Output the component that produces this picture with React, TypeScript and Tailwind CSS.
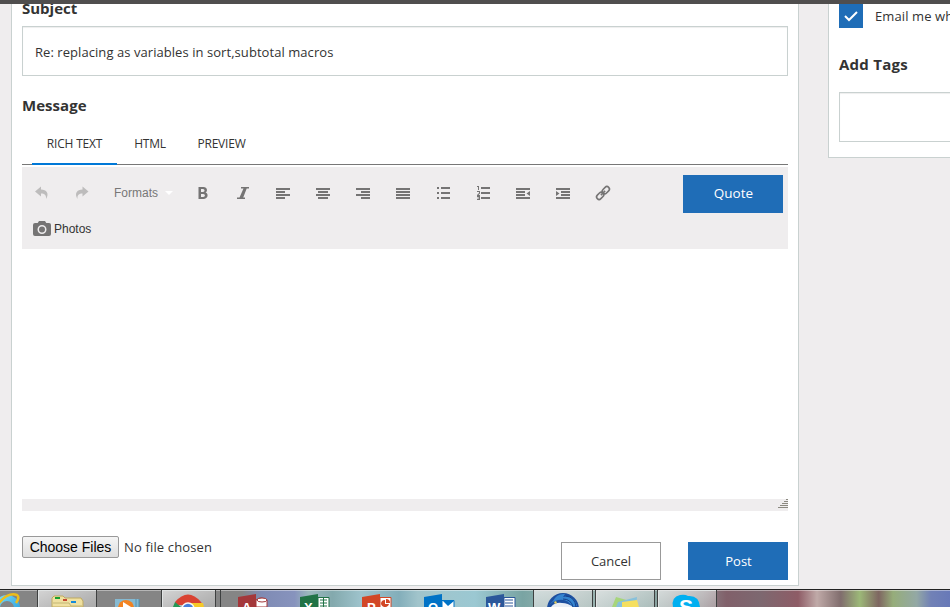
import type { ReactNode } from "react";

const Icon = ({ children, className = "text-[#757474]" }: { children: ReactNode; className?: string }) => (
   <button className={"w-10 h-6 flex items-center justify-center " + className}>
      <svg width="18" height="18" viewBox="0 0 18 18" fill="currentColor">{children}</svg>
   </button>
);

const Bars = ({ rows }: { rows: number[][] }) => (
   <>{rows.map(([x, w], i) => <rect key={i} x={x} y={4 + i * 3} width={w} height="2" />)}</>
);

const Toolbar = () => (
   <div className="h-[82px] mt-[2px] bg-[#efedee] relative">
      <div className="flex items-center pt-[14px]">
         <Icon className="text-[#bdbcbc]"><path d="M2 7.500L8 2.500v3c5.500 0 8.500 4 5 9.500.5-4-1.500-5.500-5-5.500v3z" /></Icon>
         <Icon className="text-[#bdbcbc]"><path d="M15.500 7.500l-6-5v3c-5.500 0-8.500 4-5 9.500-.5-4 1.500-5.500 5-5.500v3z" /></Icon>
         <button className="w-[81px] h-6 pl-[12px] flex items-center gap-[7px] font-['Liberation_Sans'] text-[12px] text-[#777]">
            Formats<span className="border-x-[4px] border-x-transparent border-t-[4px] border-t-white" />
         </button>
         <Icon><path fillRule="evenodd" d="M4.500 3h5c4 0 4.500 4.500 2 5.600 3.500 1.200 2.500 6.400-2 6.400h-5zM7 5v3h2c2 0 2-3 0-3zM7 10v3h2.200c2.300 0 2.300-3 0-3z" /></Icon>
         <Icon><path d="M7 3h8v1.500h-2.300L9.200 13.500H11V15H3v-1.500h2.500L9.500 4.500H7z" /></Icon>
         <Icon><Bars rows={[[2, 14], [2, 9], [2, 14], [2, 9]]} /></Icon>
         <Icon><Bars rows={[[2, 14], [4, 10], [2, 14], [4, 10]]} /></Icon>
         <Icon><Bars rows={[[2, 14], [7, 9], [2, 14], [7, 9]]} /></Icon>
         <Icon><Bars rows={[[2, 14], [2, 14], [2, 14], [2, 14]]} /></Icon>
         <Icon><path d="M3 3h2v2H3zM7 3h9v2H7zM3 8h2v2H3zM7 8h9v2H7zM3 13h2v2H3zM7 13h9v2H7z" /></Icon>
         <Icon><path d="M3 2h2v4H4V3H3zM3 7h3v2.500L4.500 11H6v1H3v-1l2-2V8H3zM3 12h3v4H3v-1h2v-.5H3.500v-1H5V13H3zM7 3h9v2H7zM7 8h9v2H7zM7 13h9v2H7z" /></Icon>
         <Icon><path d="M2 4h14v2H2zM2 7h9v2H2zM2 10h9v2H2zM2 13h14v2H2zM16 7v5l-3.500-2.500z" /></Icon>
         <Icon><path d="M2 4h14v2H2zM7 7h9v2H7zM7 10h9v2H7zM2 13h14v2H2zM2 7v5l3.500-2.500z" /></Icon>
         <Icon>
            <g fill="none" stroke="currentColor" strokeWidth="1.600" transform="rotate(-45 9 9)">
               <rect x="1" y="6.500" width="8" height="5" rx="2.500" /><rect x="9" y="6.500" width="8" height="5" rx="2.500" /><path d="M6 9h6" />
            </g>
         </Icon>
      </div>
      <button className="flex items-center gap-[3px] ml-[11px] mt-3 h-6 font-['Liberation_Sans'] text-[12px] text-[#333]">
         <svg width="18" height="16" viewBox="0 0 18 16" fill="#757474"><path fillRule="evenodd" d="M6 0h6l1.300 2H16q2 0 2 2v9q0 2-2 2H2q-2 0-2-2V4q0-2 2-2h2.700zM9 4a4.500 4.500 0 100 9 4.500 4.500 0 000-9zm0 1.500a3 3 0 110 6 3 3 0 010-6z" /></svg>
         Photos
      </button>
      <button className="absolute right-[5px] top-2 w-[100px] h-[38px] pl-px pb-px bg-[#1f6db7] text-white text-[13.5px]">Quote</button>
   </div>
);

const Taskbar = () => (
   <div className="h-[18px] shrink-0 border-t border-[#222] bg-[#858585] overflow-hidden">
      <svg width="950" height="17" viewBox="0 590 950 17">
         <defs>
            <linearGradient id="glass">
               <stop offset="0" stopColor="#858585" /><stop offset=".255" stopColor="#858585" /><stop offset=".275" stopColor="#7f8bb4" />
               <stop offset=".31" stopColor="#8793bd" /><stop offset=".325" stopColor="#9bb8bd" /><stop offset=".35" stopColor="#83a9ad" />
               <stop offset=".38" stopColor="#9ec3cc" /><stop offset=".42" stopColor="#83aeba" /><stop offset=".44" stopColor="#a1c4cb" />
               <stop offset=".5" stopColor="#9bc8d2" /><stop offset=".55" stopColor="#79a4a3" /><stop offset=".6" stopColor="#a0b8b5" />
               <stop offset=".68" stopColor="#88a8a4" /><stop offset=".74" stopColor="#8b8387" /><stop offset=".765" stopColor="#81606a" />
               <stop offset=".8" stopColor="#7d6870" /><stop offset=".84" stopColor="#8e5c66" /><stop offset=".86" stopColor="#c0aaa8" />
               <stop offset=".885" stopColor="#806d6d" /><stop offset=".905" stopColor="#9cb878" /><stop offset=".925" stopColor="#7e6661" />
               <stop offset=".94" stopColor="#96ad7a" /><stop offset=".965" stopColor="#93a8a5" /><stop offset=".98" stopColor="#7181b6" /><stop offset="1" stopColor="#6879b8" />
            </linearGradient>
            <linearGradient id="tile" x2="1" y2="1"><stop stopColor="#eee" stopOpacity=".75" /><stop offset="1" stopColor="#ddd" stopOpacity=".35" /></linearGradient>
            <linearGradient id="ring" y2="1"><stop stopColor="#75dafa" /><stop offset="1" stopColor="#269bd8" /></linearGradient>
         </defs>
         <path fill="url(#glass)" d="M0 590h950v17H0z" />
         <path fill="#fff" fillOpacity=".4" d="M0 590h950v1H0z" />
         {[[38, 58], [162, 53], [533, 59], [596, 58], [658, 58]].map(([x, w]) => (
            <rect key={x} x={x + 0.5} y="590.5" width={w} height="24" fill="url(#tile)" stroke="#e0e3e3" />
         ))}
         <path d="M37.500 590v17M96.500 590v17M161.500 590v17M215.500 590v17M220.500 590v17M533.500 590v17M592.500 590v17M595.500 590v17M654.500 590v17M657.500 590v17M716.500 590v17" stroke="#3e4040" />
         <circle cx="7" cy="608" r="10" fill="none" stroke="url(#ring)" strokeWidth="6" />
         <path d="M-1 603Q8 592 17 595q3 2-1 8" fill="none" stroke="#edbd1b" strokeWidth="2.500" />
         <path d="M52 598l2-2h9l2 2h16l2 3v6H52z" fill="#efe0a0" stroke="#bea961" /><path d="M55 597h5v2h-5z" fill="#16a030" /><path d="M63 599h4v2h-4z" fill="#c54931" /><path d="M71 601h5v2h-5z" fill="#178bd8" /><path d="M53 603h16l2 3h11" stroke="#c3b675" fill="none" />
         <path d="M115 599h24v8h-24z" fill="#86bad2" /><path d="M136 599v8M139 599v8" stroke="#5392b2" /><circle cx="126" cy="608" r="8" fill="#f38321" /><path d="M123 602l8 5h-8z" fill="#fff" />
         <path d="M175 602q13-15 26 0l2 3h-27z" fill="#d94232" /><path d="M175 602l6 5h-8z" fill="#249855" /><path d="M190 603h13l1 4h-14z" fill="#f6c928" /><circle cx="188" cy="609" r="6" fill="#477fdb" stroke="#f7f7f7" strokeWidth="1.500" />
         <path d="M238 597l18-3v13h-18z" fill="#a4373a" /><path d="M256 600q5-4 11 0v7h-11z" fill="#fff" stroke="#a4373a" /><ellipse cx="262" cy="600" rx="5" ry="2" fill="#fff" stroke="#a4373a" />
         <path d="M300 597l18-3v13h-18z" fill="#217346" /><path d="M318 597.500h11v10h-11z" fill="#fff" stroke="#217346" /><path d="M320 600h7M320 603h7M320 606h7M323.500 598v9" stroke="#217346" />
         <path d="M362 597l18-3v13h-18z" fill="#d24726" /><path d="M380 597.500h11v10h-11z" fill="#fff" stroke="#d24726" /><path d="M381 602a4 4 0 008 2h-4v-4q-4 0-4 4zM386 599v4h4q0-4-4-4z" fill="#d24726" />
         <path d="M424 597l18-3v13h-18z" fill="#0072c6" /><path d="M442 600.500h12v7h-12z" fill="#fff" stroke="#0072c6" /><path d="M443 601l5 5 6-5" fill="#0072c6" />
         <path d="M486 597l18-3v13h-18z" fill="#2b579a" /><path d="M504 597.500h11v10h-11z" fill="#fff" stroke="#2b579a" /><path d="M505 600h8M505 603h8M505 606h8" stroke="#2b579a" />
         <g fill="#fff" fontFamily="Liberation Sans" fontWeight="700" fontSize="13"><text x="242" y="612">A</text><text x="304" y="612">X</text><text x="367" y="612">P</text><text x="428" y="612">O</text><text x="488" y="612">W</text></g>
         <circle cx="563" cy="609" r="16" fill="#1d4f9f" />
         <path d="M553 601q4-8 12-7l-2 3q11-3 14 9l-5 1q-4-9-14-7-5 1-9 5z" fill="#3584cf" />
         <path d="M551 607q4-5 11-4 6 0 11 4z" fill="#e8edf5" /><path d="M566 596q9 1 10 11M563 599q8 0 10 8" fill="none" stroke="#16408a" />
         <circle cx="555.500" cy="602.500" r="1.200" fill="#ead35e" />
         <path d="M616 597l14 4-3 6h-15z" fill="#a7d57b" /><path d="M618 602l19-5-1 10h-20z" fill="#87c1db" /><path d="M622 602l15-2 2 7h-17z" fill="#f5df5f" />
         <path d="M673 607q-2-10 7-12 5-1 8 1 11-1 12 11z" fill="#00aff0" /><text x="679" y="614" fill="#fff" fontFamily="Liberation Sans" fontWeight="700" fontSize="21">S</text>
      </svg>
   </div>
);

export default function App() {
   return (
      <div className="w-[950px] h-[607px] overflow-hidden flex flex-col bg-[#efedee] font-['Open_Sans',sans-serif] text-[#333]">
         <div className="h-1 shrink-0 bg-[#504e4e]" />
         <div className="h-[585px] shrink-0 flex items-start overflow-hidden">
            <main className="ml-[11px] w-[788px] h-[582px] shrink-0 bg-white border border-t-0 border-[#c9d1d0] px-[10px] overflow-hidden">
               <h2 className="-mt-[8px] h-6 leading-6 text-[15px] font-bold">Subject</h2>
               <input className="block mt-[6px] w-full h-[50px] border border-[#c9d1d0] pl-3 pt-[2px] text-[13px] tracking-[0.06px] shadow-[inset_0_1px_1px_#eee]" defaultValue="Re: replacing as variables in sort,subtotal macros" />
               <h2 className="mt-[17px] h-6 leading-6 text-[15px] font-bold tracking-[0.05px]">Message</h2>
               <nav className="mt-px h-[47px] border-b border-[#777] pl-[10px] flex text-[12px] tracking-[-0.2px]">
                  <span className="w-[85px] h-[47px] border-b-2 border-[#0078d7] pt-[18px] leading-4 text-center">RICH TEXT</span>
                  <span className="w-[66px] pt-[18px] leading-4 text-center">HTML</span>
                  <span className="w-[77px] pt-[18px] leading-4 text-center">PREVIEW</span>
               </nav>
               <Toolbar />
               <div className="h-[250px]" />
               <div className="h-3 bg-[#efedee] flex justify-end">
                  <svg width="10" height="10" stroke="#8b8980"><path d="M8 .5h2M6 2.500h4M4 4.500h6M2 6.500h8M0 8.500h10" /></svg>
               </div>
               <div className="flex items-start">
                  <button className="mt-[25px] w-[97px] h-[22px] border border-[#999] rounded-[2px] bg-linear-to-b from-[#f5f5f5] to-[#dedede] font-['Liberation_Sans'] text-[14px] leading-5 text-black whitespace-nowrap">Choose Files</button>
                  <span className="mt-[26px] ml-[5px] text-[13px] tracking-[0.15px] leading-5">No file chosen</span>
                  <button className="ml-auto mt-[31px] w-[100px] h-[38px] pt-px border border-[#999] text-[13px]">Cancel</button>
                  <button className="ml-[27px] mt-[31px] w-[100px] h-[38px] pt-px pl-px bg-[#1f6db7] text-white text-[13px]">Post</button>
               </div>
            </main>
            <aside className="ml-[29px] w-[300px] h-[154px] shrink-0 bg-white border border-t-0 border-[#c9d1d0] pl-[10px]">
               <label className="flex items-center h-6 text-[13px] font-medium whitespace-nowrap">
                  <span className="w-6 h-6 bg-[#1f6db7] flex items-center justify-center"><svg width="14" height="12" fill="none" stroke="#fff" strokeWidth="2"><path d="M1 6l4 4 8-8" /></svg></span>
                  <span className="ml-3 pt-px tracking-[0.1px]">Email me when</span>
               </label>
               <h2 className="mt-[24px] h-6 leading-6 text-[15px] font-bold tracking-[0.25px]">Add Tags</h2>
               <div className="mt-[16px] w-[250px] h-[50px] border border-[#c9d1d0] shadow-[inset_0_1px_1px_#eee]" />
            </aside>
         </div>
         <Taskbar />
      </div>
   );
}
